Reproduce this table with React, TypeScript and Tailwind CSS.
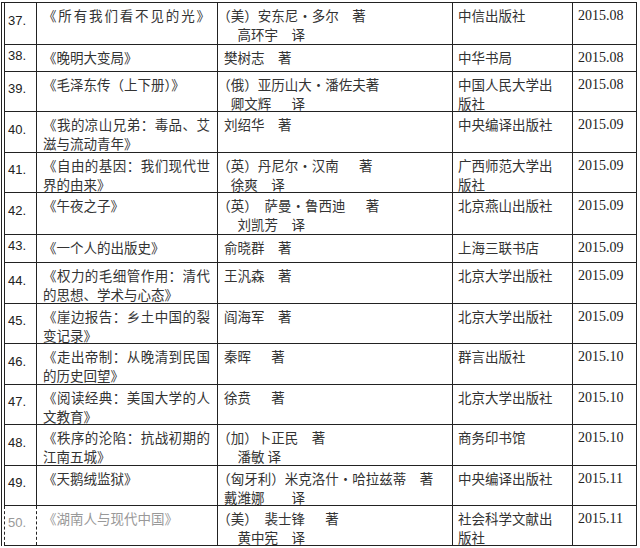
const cjk = "font-['Noto_Sans_CJK_SC',sans-serif]";

type Row = {
  n: string;
  h: string;
  title: string[];
  spread?: boolean;
  author: string[];
  pub: string[];
  date: string;
  faded?: boolean;
};

const rows: Row[] = [
  { n: "37.", h: "h-[42px]", title: ["《所有我们看不见的光》"], spread: true, author: ["（美）安东尼•多尔　著", "　高环宇　译"], pub: ["中信出版社"], date: "2015.08" },
  { n: "38.", h: "h-[27px]", title: ["《晚明大变局》"], author: ["樊树志　著"], pub: ["中华书局"], date: "2015.08" },
  { n: "39.", h: "h-[40px]", title: ["《毛泽东传（上下册）》"], author: ["（俄）亚历山大•潘佐夫著", "\u2002卿文辉　\u2002译"], pub: ["中国人民大学出", "版社"], date: "2015.08" },
  { n: "40.", h: "h-[41px]", title: ["《我的凉山兄弟：毒品、艾", "滋与流动青年》"], spread: true, author: ["刘绍华　著"], pub: ["中央编译出版社"], date: "2015.09" },
  { n: "41.", h: "h-[40px]", title: ["《自由的基因：我们现代世", "界的由来》"], spread: true, author: ["（英）丹尼尔•汉南　\u2002著", "\u2002徐爽　译"], pub: ["广西师范大学出", "版社"], date: "2015.09" },
  { n: "42.", h: "h-[42px]", title: ["《午夜之子》"], author: ["（英）\u2002萨曼•鲁西迪　\u2002著", "　刘凯芳　译"], pub: ["北京燕山出版社"], date: "2015.09" },
  { n: "43.", h: "h-[28px]", title: ["《一个人的出版史》"], author: ["俞晓群　著"], pub: ["上海三联书店"], date: "2015.09" },
  { n: "44.", h: "h-[41px]", title: ["《权力的毛细管作用：清代", "的思想、学术与心态》"], spread: true, author: ["王汎森　著"], pub: ["北京大学出版社"], date: "2015.09" },
  { n: "45.", h: "h-[40px]", title: ["《崖边报告：乡土中国的裂", "变记录》"], spread: true, author: ["阎海军　著"], pub: ["北京大学出版社"], date: "2015.09" },
  { n: "46.", h: "h-[41px]", title: ["《走出帝制：从晚清到民国", "的历史回望》"], spread: true, author: ["秦晖　\u2002著"], pub: ["群言出版社"], date: "2015.10" },
  { n: "47.", h: "h-[40px]", title: ["《阅读经典：美国大学的人", "文教育》"], spread: true, author: ["徐贲　\u2002著"], pub: ["北京大学出版社"], date: "2015.10" },
  { n: "48.", h: "h-[41px]", title: ["《秩序的沦陷：抗战初期的", "江南五城》"], spread: true, author: ["（加）卜正民　著", "　潘敏 译"], pub: ["商务印书馆"], date: "2015.10" },
  { n: "49.", h: "h-[40px]", title: ["《天鹅绒监狱》"], author: ["（匈牙利）米克洛什•哈拉兹蒂　著", "戴潍娜　　译"], pub: ["中央编译出版社"], date: "2015.11" },
  { n: "50.", h: "h-[40px]", title: ["《湖南人与现代中国》"], author: ["（美）\u2002裴士锋　\u2002著", "　黄中宪　译"], pub: ["社会科学文献出", "版社"], date: "2015.11", faded: true },
];

function Lines({ lines, spread }: { lines: string[]; spread?: boolean }) {
  return (
    <>
      {lines.map((l, i) => (
        <div
          key={i}
          className={
            spread && i === 0
              ? "whitespace-pre [text-align-last:justify]"
              : "whitespace-pre"
          }
        >
          {l}
        </div>
      ))}
    </>
  );
}

export default function App() {
  return (
    <div className="w-[640px] h-[548px] bg-white overflow-hidden text-[#333]">
      <div className="ml-[1px] mt-[2px] w-[636px] border-l border-t border-[#222] pl-[2px]">
        {rows.map((r) => (
          <div key={r.n} className={`flex border-b border-[#222] ${r.h}`}>
            <div
              className={`w-[33px] shrink-0 flex items-center pb-[5px] pl-[3px] border-l border-r border-[#222] font-['Liberation_Sans',sans-serif] text-[13px] ${
                r.faded ? "border-dashed text-[#999]" : "text-[#222]"
              }`}
            >
              {r.n}
            </div>
            <div
              className={`w-[181px] shrink-0 border-r border-[#222] pt-[3px] pl-[6px] pr-[7px] text-[13.5px] leading-[19px] ${cjk} ${
                r.faded ? "text-[#999]" : ""
              }`}
            >
              <Lines lines={r.title} spread={r.spread} />
            </div>
            <div className={`w-[235px] shrink-0 border-r border-[#222] pt-[3px] pl-[6px] text-[13.5px] leading-[19px] [text-spacing-trim:trim-start] ${cjk}`}>
              <Lines lines={r.author} />
            </div>
            <div className={`w-[120px] shrink-0 border-r border-[#222] pt-[3px] pl-[5px] text-[13.5px] leading-[19px] ${cjk}`}>
              <Lines lines={r.pub} />
            </div>
            <div className="w-[64px] shrink-0 border-r border-[#222] pt-[3px] pl-[5px] text-[14px] leading-[19px] text-[#222] font-['Liberation_Serif',serif]">
              {r.date}
            </div>
          </div>
        ))}
      </div>
    </div>
  );
}
